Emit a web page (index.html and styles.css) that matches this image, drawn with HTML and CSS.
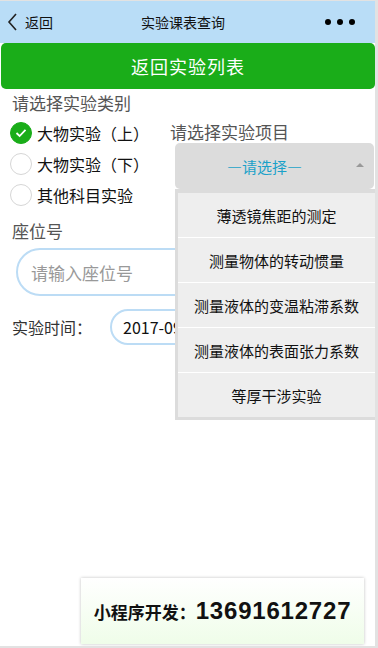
FILE: index.html
```html
<!DOCTYPE html>
<html lang="zh">

<head>
    <meta charset="UTF-8">
    <meta name="viewport" content="width=device-width, initial-scale=1.0">
    <title>实验课表查询</title>
    <link rel="stylesheet" href="styles.css">
</head>

<body>
    <div class="phone">
        <div class="navbar">
            <div class="nav-back">
                <svg width="12" height="18" viewBox="0 0 12 18">
                    <path d="M9 1 L2 9 L9 17" fill="none" stroke="#222" stroke-width="1.6" />
                </svg>
                <span>返回</span>
            </div>
            <div class="nav-title">实验课表查询</div>
            <div class="nav-more"><i></i><i></i><i></i></div>
        </div>

        <button class="btn-back">返回实验列表</button>

        <div class="section-title">请选择实验类别</div>

        <div class="choose-row">
            <div class="radios">
                <label class="radio-item">
                    <span class="radio checked">
                        <svg width="12" height="10" viewBox="0 0 12 10">
                            <path d="M1.5 5 L4.6 8 L10.5 1.8" fill="none" stroke="#fff" stroke-width="1.8" />
                        </svg>
                    </span>
                    大物实验（上）
                </label>
                <label class="radio-item"><span class="radio"></span>大物实验（下）</label>
                <label class="radio-item"><span class="radio"></span>其他科目实验</label>
            </div>

            <div class="project">
                <div class="project-title">请选择实验项目</div>
                <div class="picker">
                    <span class="picker-text">—请选择—</span>
                    <span class="picker-arrow"></span>
                </div>
                <ul class="options">
                    <li>薄透镜焦距的测定</li>
                    <li>测量物体的转动惯量</li>
                    <li>测量液体的变温粘滞系数</li>
                    <li>测量液体的表面张力系数</li>
                    <li>等厚干涉实验</li>
                </ul>
            </div>
        </div>

        <div class="section-title seat-title">座位号</div>
        <div class="seat-input">请输入座位号</div>

        <div class="date-row">
            <span class="date-label">实验时间：</span>
            <div class="date-input">2017-09-01</div>
        </div>

        <div class="ad">
            <span class="ad-cn">小程序开发：</span><span class="ad-num">13691612727</span>
        </div>
    </div>
</body>

</html>
```

FILE: styles.css
```css
* {
    box-sizing: border-box;
}

body {
    margin: 0;
    font-family: "Noto Sans CJK SC", "Liberation Sans", sans-serif;
    background-color: #fff;
}

.phone {
    width: 378px;
    height: 648px;
    display: flex;
    flex-direction: column;
    border-top: 1px solid #e2e2e2;
    border-right: 3px solid #e2e2e2;
    border-bottom: 2px solid #e2e2e2;
    overflow: hidden;
}

.navbar {
    height: 42px;
    flex-shrink: 0;
    display: flex;
    align-items: center;
    justify-content: space-between;
    padding: 0 20px 0 7px;
    background-color: #b9ddf7;
    color: #111;
    font-size: 14px;
}

.nav-back {
    display: flex;
    align-items: center;
    gap: 6px;
    width: 80px;
}

.nav-back svg {
    display: block;
}

.nav-title {
    margin-left: 4px;
}

.nav-more {
    width: 80px;
    display: flex;
    justify-content: flex-end;
    gap: 6px;
}

.nav-more i {
    width: 6px;
    height: 6px;
    border-radius: 50%;
    background-color: #000;
}

.btn-back {
    flex-shrink: 0;
    height: 46px;
    margin: 0 0 0 1px;
    border: none;
    border-radius: 5px;
    background-color: #1aad19;
    color: #fff;
    font-family: "Noto Sans CJK SC", sans-serif;
    font-size: 18px;
    letter-spacing: 1px;
}

.section-title {
    margin: 3px 0 0 12px;
    font-size: 17px;
    line-height: 22px;
    color: #555;
}

.choose-row {
    display: flex;
    position: relative;
}

.radios {
    width: 170px;
    padding: 3px 0 0 10px;
}

.radio-item {
    height: 31px;
    display: flex;
    align-items: center;
    gap: 5px;
    font-size: 16px;
    color: #111;
}

.radio {
    width: 22px;
    height: 22px;
    border-radius: 50%;
    border: 1px solid #d6d6d6;
    background-color: #fff;
    display: flex;
    align-items: center;
    justify-content: center;
}

.radio.checked {
    border-color: #1aad19;
    background-color: #1aad19;
}

.project {
    flex: 1;
    padding-top: 8px;
    position: relative;
}

.project-title {
    font-size: 17px;
    line-height: 20px;
    color: #555;
}

.picker {
    height: 46px;
    margin: 1px 1px 0 5px;
    border-radius: 5px;
    background-color: #dcdcdc;
    display: flex;
    align-items: center;
    justify-content: center;
    position: relative;
}

.picker-text {
    margin-right: 20px;
    color: #1ba1c9;
    font-size: 15px;
}

.picker-arrow {
    position: absolute;
    right: 10px;
    top: 20px;
    width: 0;
    height: 0;
    border-left: 4px solid transparent;
    border-right: 4px solid transparent;
    border-bottom: 4px solid #999;
}

.options {
    position: absolute;
    top: 75px;
    left: 5px;
    right: -3px;
    margin: 0;
    padding: 0;
    list-style: none;
    background-color: #fff;
    border: 3px solid #dcdcdc;
    border-top-width: 4px;
    z-index: 2;
}

.options li {
    height: 45px;
    display: flex;
    align-items: center;
    justify-content: center;
    background-color: #eee;
    border-bottom: 1px solid #fff;
    font-size: 15px;
    color: #111;
}

.options li:last-child {
    height: 44px;
    border-bottom: none;
}

.seat-title {
    margin-top: 10px;
}

.seat-input {
    height: 48px;
    margin: 6px 16px 0 16px;
    padding-left: 13px;
    display: flex;
    align-items: center;
    border: 2px solid #bcdcf5;
    border-radius: 24px;
    color: #999;
    font-size: 17px;
}

.date-row {
    display: flex;
    align-items: center;
    margin: 13px 0 0 12px;
}

.date-label {
    width: 98px;
    font-size: 16px;
    color: #333;
}

.date-input {
    width: 240px;
    height: 36px;
    padding-left: 11px;
    display: flex;
    align-items: center;
    border: 2px solid #bcdcf5;
    border-radius: 18px;
    font-size: 16px;
    color: #111;
}

.ad {
    margin: auto 11px 2px 81px;
    height: 66px;
    display: flex;
    align-items: center;
    justify-content: center;
    background: linear-gradient(#ffffff, #effde9);
    box-shadow: 0 0 3px rgba(0, 0, 0, 0.25);
    color: #111;
    font-weight: bold;
}

.ad-cn {
    font-size: 17px;
}

.ad-num {
    font-family: "Liberation Sans", sans-serif;
    font-size: 24px;
    letter-spacing: 0.8px;
}
```
